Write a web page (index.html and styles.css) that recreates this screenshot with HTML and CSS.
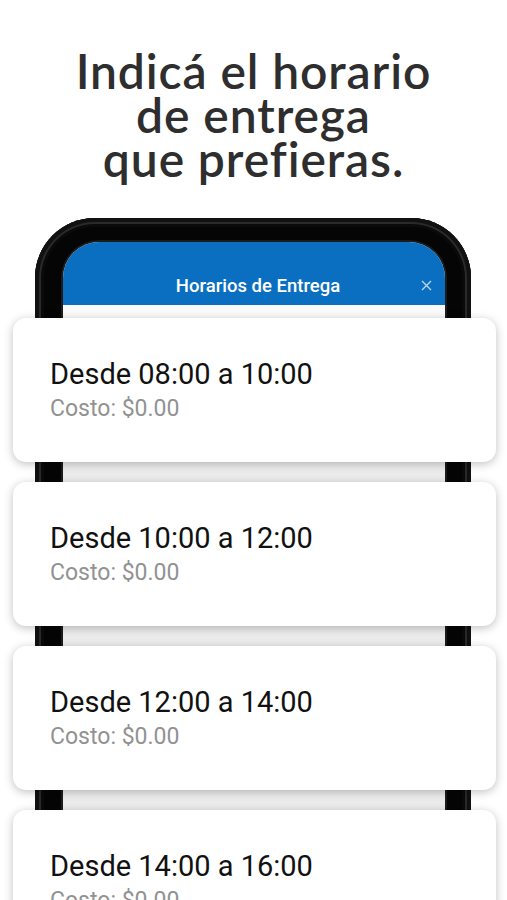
FILE: index.html
```html
<!DOCTYPE html>
<html lang="es">
<head>
    <meta charset="UTF-8">
    <meta name="viewport" content="width=device-width, initial-scale=1.0">
    <title>Horarios de Entrega</title>
    <link rel="stylesheet" href="styles.css">
</head>
<body>
    <h1 class="headline">Indicá el horario<br>de entrega<br>que prefieras.</h1>

    <div class="stage">
        <div class="phone">
            <div class="screen">
                <div class="screen-header">
                    <span></span>
                    <span class="screen-title">Horarios de Entrega</span>
                    <span class="close">
                        <svg width="11" height="11" viewBox="0 0 11 11">
                            <path d="M1 1 L10 10 M10 1 L1 10" stroke="#b9d6f2" stroke-width="1.4" fill="none"/>
                        </svg>
                    </span>
                </div>
            </div>
        </div>

        <div class="slots">
            <div class="slot">
                <p class="slot-time">Desde 08:00 a 10:00</p>
                <p class="slot-cost">Costo: $0.00</p>
            </div>
            <div class="slot">
                <p class="slot-time">Desde 10:00 a 12:00</p>
                <p class="slot-cost">Costo: $0.00</p>
            </div>
            <div class="slot">
                <p class="slot-time">Desde 12:00 a 14:00</p>
                <p class="slot-cost">Costo: $0.00</p>
            </div>
            <div class="slot">
                <p class="slot-time">Desde 14:00 a 16:00</p>
                <p class="slot-cost">Costo: $0.00</p>
            </div>
        </div>
    </div>
</body>
</html>
```

FILE: styles.css
```css
html, body {
    height: 900px;
    overflow: hidden;
}
body {
    margin: 0;
    background-color: #fff;
    font-family: Roboto, "Liberation Sans", sans-serif;
}
.headline {
    margin: 49px 0 37px;
    text-align: center;
    font-family: Lato, "Open Sans", sans-serif;
    font-weight: 600;
    font-size: 48px;
    line-height: 44px;
    letter-spacing: 0.9px;
    font-variant-ligatures: none;
    color: #2e2e2e;
}
.stage {
    display: grid;
}
.phone,
.slots {
    grid-area: 1 / 1;
}
.phone {
    margin: 0 36px 0 35px;
    height: 760px;
    padding: 24px 26px 0 28px;
    background: #050505;
    border-radius: 60px 60px 0 0;
    box-shadow: inset 0 0 0 4px #111, inset 0 0 0 6px #2a2a2a, inset 0 0 0 9px #0a0a0a;
}
.screen {
    height: 100%;
    background: #ececec;
    border-radius: 36px 36px 0 0;
    overflow: hidden;
    box-shadow: 0 0 0 2px #1c1c1c;
}
.screen-header {
    display: grid;
    grid-template-columns: 40px 1fr 40px;
    align-items: center;
    box-sizing: content-box;
    height: 29px;
    padding-top: 34px;
    background: #0b6fc1;
    border-bottom: 13px solid #fafafa;
}
.screen-title {
    padding-left: 8px;
    text-align: center;
    color: #fff;
    font-size: 18.5px;
    font-weight: 500;
    line-height: 20px;
    margin-top: -10px;
}
.close {
    display: flex;
    justify-content: center;
    margin-top: -10px;
    padding-left: 2px;
}
.slots {
    display: flex;
    flex-direction: column;
    gap: 20px;
    padding: 100px 11px 0 13px;
}
.slot {
    flex: none;
    height: 144px;
    box-sizing: border-box;
    padding: 38px 37px 0;
    background: #fff;
    border-radius: 13px;
    box-shadow: 0 2px 10px rgba(0, 0, 0, 0.25);
}
.slot p {
    margin: 0;
}
.slot-time {
    font-size: 29px;
    line-height: 36px;
    color: #111;
}
.slot-cost {
    margin-top: 3px !important;
    font-size: 23px;
    line-height: 28px;
    color: #929292;
}
```
